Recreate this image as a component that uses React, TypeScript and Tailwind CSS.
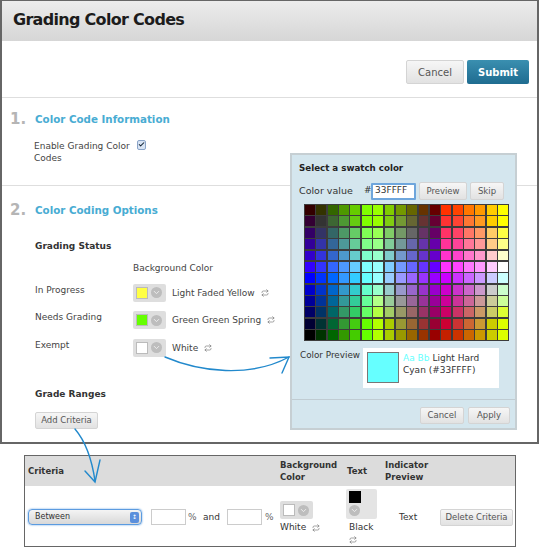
import { ChevronDown, Repeat, Check } from "lucide-react";

const SWATCHES = [
  "330000 333300 336600 4d9900 66cc00 7fff00 99ff00 80cc00 739900 666600 663300 660000 ff3300 ff4400 ff7700 ff9900 ffcc00 ffff00",
  "330033 333333 3d6633 4d9933 66cc11 7fff00 99ff00 80cc11 739933 666633 663333 660033 ff3333 ff4433 ff7733 ff9922 ffcc00 ffff00",
  "330066 333366 336666 4d9966 66cc66 7fff55 99ff55 80cc66 739966 666666 663366 660066 ff3366 ff4466 ff7766 ff9966 ffcc66 ffff44",
  "330099 3333aa 336699 4d9999 66cc99 7fff88 99ff88 80cc99 739999 6666aa 6633aa 6600aa ff3399 ff4499 ff7799 ff9999 ffcc88 ffff88",
  "3300cc 3333dd 3366cc 4d99cc 66cccc 7fffcc 99ffcc 80cccc 7399cc 6666cc 6633cc 6600cc ff33cc ff44cc ff77cc ff99cc ffcccc ffffcc",
  "3300ff 3333ff 3366ff 4d99ff 66ccff 7fffff 99ffff 80ccff 7399ff 6666ff 6633ff 6600ff ff33ff ff44ff ff77ff ff99ff ffccff ffffff",
  "0000ff 0033ff 0066ff 3399ff 33ccff 66ffff 99ffff 99ccff 9999ff 9966ff 9933ff 9900ff cc00ff cc33ff cc66ff cc99ff ccccff ccffff",
  "0000cc 0033cc 0066cc 3399cc 33cccc 66ffcc 99ffcc 99cccc 9999cc 9966cc 9933cc 9900cc cc00cc cc33cc cc66cc cc99cc cccccc ccffcc",
  "000099 003399 006699 339999 33cc99 66ff99 b3ff88 99cc99 999999 996699 993399 990099 cc0099 cc3399 cc6699 cc9999 cccc99 ccff99",
  "000066 003366 006666 339966 33cc66 66ff66 b3ff44 a3cc66 999966 996666 993366 990066 cc0066 cc3366 cc6666 cc9966 cccc66 ddff33",
  "000033 003333 006633 339933 44cc11 66ff00 b3ff00 aacc00 999933 996633 993333 990033 cc0033 cc3333 cc6633 cc9933 cccc00 ddff00",
  "000000 003300 006600 339900 44cc00 66ff00 b3ff00 aacc00 999900 996600 993300 990000 c42000 cc3300 cc6600 cc9900 cccc00 ddff00",
];

function Btn({ label, className = "" }: { label: string; className?: string }) {
  return (
    <div className={`flex items-center justify-center rounded-[2px] border border-[#d4d4d4] bg-gradient-to-b from-[#f6f6f6] to-[#e2e2e2] text-[8.5px] text-[#555] ${className}`}>
      {label}
    </div>
  );
}

function ColorPicker({ color }: { color: string }) {
  return (
    <div className="flex h-[18px] w-[33px] items-center gap-[3px] rounded-[2px] bg-[#dedede] pl-[3px]">
      <div className="h-[12px] w-[12px] border border-[#bbb]" style={{ backgroundColor: color }} />
      <div className="flex h-[11px] w-[11px] items-center justify-center rounded-full bg-[#bdbdbd]">
        <ChevronDown size={9} strokeWidth={2.5} className="text-[#eee]" />
      </div>
    </div>
  );
}

function StatusRow({ label, color, name }: { label: string; color: string; name: string }) {
  return (
    <div className="flex h-[27.5px] text-[9px] leading-[12px] text-[#444]">
      <div className="w-[98px]">{label}</div>
      <ColorPicker color={color} />
      <div className="ml-[6px] flex h-[18px] items-center gap-[6px]">
        {name}
        <Repeat size={8} className="text-[#777]" />
      </div>
    </div>
  );
}

function SectionTitle({ num, title }: { num: string; title: string }) {
  return (
    <div className="flex items-center">
      <div className="w-[33px] pl-[8px] text-[15px] font-bold text-[#b5b5b5]">{num}</div>
      <div className="text-[10.3px] font-bold text-[#48acd3]">{title}</div>
    </div>
  );
}

function SwatchPopup() {
  return (
    <div className="absolute left-[288px] top-[152px] flex h-[277px] w-[227px] flex-col border-2 border-[#c6cfd3] bg-[#d4e6ee]">
      <div className="pl-[7px] pt-[7px] text-[8.7px] font-bold text-[#222]">Select a swatch color</div>
      <div className="mt-[7px] flex items-center pl-[7px] text-[9.5px] text-[#333]">
        <div className="w-[65px]">Color value</div>
        <div className="w-[7px] text-[9px]">#</div>
        <div className="flex h-[17px] w-[45px] items-center rounded-[1px] border-2 border-[#6ea6dc] bg-white pl-[2px] text-[9px]">33FFFF</div>
        <Btn label="Preview" className="ml-[3px] h-[18px] w-[48px]" />
        <Btn label="Skip" className="ml-[3px] h-[18px] w-[34px]" />
      </div>
      <div className="ml-[12px] mt-[4px] grid h-[137px] w-[205px] grid-cols-[repeat(18,1fr)] grid-rows-[repeat(12,1fr)] gap-[1.5px] border border-[#3c3c3c] bg-[#3c3c3c]">
        {SWATCHES.flatMap((row, r) =>
          row.split(" ").map((c, i) => <div key={`${r}-${i}`} style={{ backgroundColor: `#${c}` }} />)
        )}
      </div>
      <div className="mt-[7px] flex pl-[8px]">
        <div className="w-[63px] whitespace-nowrap pt-[1px] text-[8.8px] text-[#333]">Color Preview</div>
        <div className="flex h-[40px] w-[136px] gap-[4px] bg-white pl-[4px] pt-[4px]">
          <div className="h-[31px] w-[32px] border border-[#777] bg-[#66ffff]" />
          <div className="w-[88px] text-[9px] leading-[12px] text-[#333]">
            <div className="flex gap-[3px]">
              <span className="text-[#66ffff]">Aa Bb</span>
              <span>Light Hard</span>
            </div>
            <div>Cyan (#33FFFF)</div>
          </div>
        </div>
      </div>
      <div className="mt-[11px] flex flex-1 items-start justify-end gap-[4px] border-t border-[#c0ccd2] pr-[5px] pt-[7px]">
        <Btn label="Cancel" className="h-[17px] w-[44px]" />
        <Btn label="Apply" className="h-[17px] w-[42px] font-medium text-[#333]" />
      </div>
    </div>
  );
}

function CriteriaStrip() {
  return (
    <div className="mx-[24px] mt-[11px] h-[92px] w-[492px] border border-[#666] text-[9px] text-[#333]">
      <div className="flex h-[30px] items-center bg-[#dcdcdc] text-[8.5px] font-bold leading-[12px] text-[#333]">
        <div className="w-[255px] pl-[3px]">Criteria</div>
        <div className="w-[67px]">Background<br />Color</div>
        <div className="w-[38px]">Text</div>
        <div>Indicator<br />Preview</div>
      </div>
      <div className="flex">
        <div className="ml-[3px] mt-[23px] flex h-[16px] w-[114px] items-center justify-between rounded-[4px] border border-[#5b9be0] bg-gradient-to-b from-[#f4f4f4] to-[#d8d8d8] pl-[6px] pr-[2px] text-[8px] shadow-[0_0_2px_#5b9be0]">
          Between
          <div className="flex h-[11px] w-[9px] items-center justify-center rounded-[2px] bg-[#5a8fdc] text-[6px] leading-none text-white">↕</div>
        </div>
        <div className="ml-[9px] mt-[23px] h-[16px] w-[35px] border border-[#ccc]" />
        <div className="ml-[2px] mt-[25px] w-[15px] text-[#666]">%</div>
        <div className="mt-[25px] w-[24px]">and</div>
        <div className="mt-[23px] h-[16px] w-[35px] border border-[#ccc]" />
        <div className="ml-[3px] mt-[25px] w-[15px] text-[#666]">%</div>
        <div className="mt-[15px] w-[66px]">
          <ColorPicker color="#ffffff" />
          <div className="mt-[2px] flex items-center gap-[6px]">White <Repeat size={8} className="text-[#777]" /></div>
        </div>
        <div className="mt-[3px] w-[53px]">
          <div className="h-[30px] w-[31px] rounded-[2px] bg-[#e4e4e4] pl-[3px] pt-[2px]">
            <div className="h-[12px] w-[12px] bg-black" />
            <div className="mt-[2px] flex h-[11px] w-[11px] items-center justify-center rounded-full bg-[#bdbdbd]">
              <ChevronDown size={9} strokeWidth={2.5} className="text-[#eee]" />
            </div>
          </div>
          <div className="mt-[2px] pl-[3px]">Black</div>
          <Repeat size={8} className="ml-[3px] mt-[1px] text-[#777]" />
        </div>
        <div className="mt-[25px] w-[41px]">Text</div>
        <Btn label="Delete Criteria" className="mt-[23px] h-[17px] w-[73px]" />
      </div>
    </div>
  );
}

export default function App() {
  return (
    <div className="relative h-[550px] w-[539px] overflow-hidden bg-white font-['DejaVu_Sans',sans-serif]">
      <div className="relative h-[444px] border-x-2 border-b-2 border-t border-[#666]">
        <div className="flex h-[40px] items-center bg-gradient-to-b from-[#ececec] to-[#d6d6d6] pb-[3px] pl-[11px] text-[16px] font-bold tracking-[-0.7px] text-[#1c1c1c]">
          Grading Color Codes
        </div>
        <div className="flex h-[56px] items-center justify-end gap-[3px] pr-[8px] pt-[6px]">
          <Btn label="Cancel" className="h-[24px] w-[58px] text-[10px]" />
          <div className="flex h-[24px] w-[62px] items-center justify-center rounded-[2px] bg-gradient-to-b from-[#3a8fb0] to-[#1f6c90] text-[10px] font-bold text-white">
            Submit
          </div>
        </div>
        <div className="h-[88px] border-t border-[#dedede] pt-[10px]">
          <SectionTitle num="1." title="Color Code Information" />
          <div className="mt-[9px] flex pl-[32px] text-[9px] leading-[12px] text-[#444]">
            <div className="w-[103px]">Enable Grading Color Codes</div>
            <div className="flex h-[10px] w-[9px] items-center justify-center rounded-[2px] border border-[#8aa4c8] bg-[#d8e4f4]">
              <Check size={9} strokeWidth={3.5} className="text-[#123]" />
            </div>
          </div>
        </div>
        <div className="border-t border-[#dedede] pt-[13px]">
          <SectionTitle num="2." title="Color Coding Options" />
          <div className="mt-[18px] pl-[33px]">
            <div className="text-[9px] font-bold text-[#333]">Grading Status</div>
            <div className="mt-[9px] pl-[98px] text-[9px] text-[#444]">Background Color</div>
            <div className="mt-[8px]">
              <StatusRow label="In Progress" color="#ffff44" name="Light Faded Yellow" />
              <StatusRow label="Needs Grading" color="#66ff00" name="Green Green Spring" />
              <StatusRow label="Exempt" color="#ffffff" name="White" />
            </div>
            <div className="mt-[22px] text-[9px] font-bold text-[#333]">Grade Ranges</div>
            <Btn label="Add Criteria" className="mt-[10px] h-[17px] w-[63px]" />
          </div>
        </div>
        <SwatchPopup />
      </div>
      <CriteriaStrip />
      <svg className="absolute left-0 top-0 h-[550px] w-[539px]" viewBox="0 0 539 550" fill="none" stroke="#2289cc" strokeWidth="1.4" strokeLinecap="round">
        <path d="M165 357 C200 372 250 378 289 357" />
        <path d="M270 358 L289 357 L282 373" />
        <path d="M75 429 C86 442 92 460 95 481" />
        <path d="M85 471 L95 482 L100 460" />
      </svg>
    </div>
  );
}
